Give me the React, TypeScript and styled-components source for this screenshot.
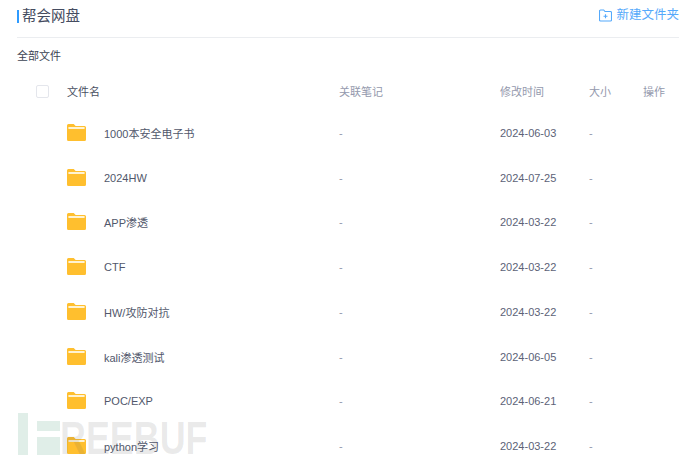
import React from "react";
import styled, { createGlobalStyle } from "styled-components";

const Global = createGlobalStyle`
  html, body { margin: 0; padding: 0; background: #fff; }
  body { width: 690px; height: 462px; overflow: hidden; font-family: "Liberation Sans", Arial, "Noto Sans CJK SC", sans-serif; }
`;
const Page = styled.div`
  position: relative; width: 690px; height: 462px; overflow: hidden; box-sizing: border-box; padding: 0 11px 0 17px;
`;
const Header = styled.header`
  box-sizing: border-box; border-bottom: 1px solid #ebedf0; height: 38px;
  display: flex; justify-content: space-between; align-items: flex-start; padding-top: 6px;
`;
const Title = styled.h1`
  margin: 0; font-size: 14.5px; line-height: 20px; font-weight: 400; color: #454c60; display: flex; align-items: center; gap: 3px;
  &::before { content: ""; flex: none; width: 2px; height: 13px; background: #2f9bff; }
`;
const NewFolder = styled.button`
  border: 0; background: none; padding: 0; display: flex; align-items: center; gap: 4px; font: inherit; font-size: 12.5px; line-height: 18px; color: #55a9fb;
`;
const Crumb = styled.div`
  font-size: 11px; line-height: 16px; color: #3c4353; margin-top: 10px;
`;
const Table = styled.div`margin-top: 7.5px;`;
const Row = styled.div<{ $head?: boolean }>`
  display: grid; grid-template-columns: 50px 272px 161px 89px 54px 1fr; align-items: center;
  height: ${p => (p.$head ? "39px" : "44.75px")};
  font-size: 11px; color: #9499ad;
`;
const CheckCell = styled.div`padding-left: 19px;`;
const Check = styled.span`
  display: block; width: 11px; height: 11px; border: 1px solid #e4e6ec; border-radius: 2px; background: #fff;
`;
const NameHead = styled.div`color: #4a5062;`;
const NameCell = styled.div`
  display: flex; align-items: center; gap: 18px; color: #51576b;
  svg { margin-bottom: 2px; flex: none; }
`;
const Dim = styled.div`color: #9499ad;`;
const DateText = styled.div`color: #5c6277;`;
const Watermark = styled.div`
  position: absolute; left: 18px; top: 413px; height: 42px; display: flex; align-items: flex-end; pointer-events: none;
`;
const MarkLogo = styled.div`
  display: grid; grid-template-columns: 10px 23px; column-gap: 9px; width: 42px; height: 42px; flex: none;
`;
const MarkBar = styled.span`background: rgba(60,150,110,.16); display: block;`;
const MarkBlocks = styled.div`
  display: grid; grid-template-rows: 10px 1fr; row-gap: 6px; margin-top: 8px;
`;
const MarkText = styled.span`
  font-family: "Liberation Sans", sans-serif; font-weight: 700; font-size: 46px; line-height: 33px; letter-spacing: 0;
  color: rgba(90,90,90,.13); transform: scaleX(.78); transform-origin: left bottom; white-space: nowrap; height: 33px;
`;

const Folder = () => (
  <svg width="19" height="18" viewBox="0 0 20 18" preserveAspectRatio="none" aria-hidden="true">
    <path d="M1.500 1h5.600l2 2H18.500A1.500 1.500 0 0 1 20 4.500v12a1.500 1.500 0 0 1-1.500 1.500h-17A1.500 1.500 0 0 1 0 16.500V2.500A1.500 1.500 0 0 1 1.500 1Z" fill="#ffbf2e" />
    <rect x="1.500" y="4" width="17" height="2" fill="#fff3d2" />
  </svg>
);
const PlusFolder = () => (
  <svg width="13" height="13" viewBox="0 0 13 13" fill="none" stroke="#55a9fb" strokeWidth="1.100" aria-hidden="true">
    <path d="M1.500 1h3.200l1.300 1.500h5.500a1 1 0 0 1 1 1v7.500a1 1 0 0 1-1 1h-10a1 1 0 0 1-1-1V2a1 1 0 0 1 1-1Z" />
    <path d="M4.500 7.200h4M6.500 5.200v4" />
  </svg>
);

const files = [
  ["1000本安全电子书", "2024-06-03"], ["2024HW", "2024-07-25"], ["APP渗透", "2024-03-22"], ["CTF", "2024-03-22"],
  ["HW/攻防对抗", "2024-03-22"], ["kali渗透测试", "2024-06-05"], ["POC/EXP", "2024-06-21"], ["python学习", "2024-03-22"],
];

export default function App() {
  return (
    <Page>
      <Global />
      <Header>
        <Title>帮会网盘</Title>
        <NewFolder><PlusFolder />新建文件夹</NewFolder>
      </Header>
      <Crumb>全部文件</Crumb>
      <Table>
        <Row $head>
          <CheckCell><Check /></CheckCell>
          <NameHead>文件名</NameHead>
          <Dim>关联笔记</Dim>
          <Dim>修改时间</Dim>
          <Dim>大小</Dim>
          <Dim>操作</Dim>
        </Row>
        {files.map(([name, date]) => (
          <Row key={name}>
            <div />
            <NameCell><Folder />{name}</NameCell>
            <Dim>-</Dim>
            <DateText>{date}</DateText>
            <Dim>-</Dim>
            <div />
          </Row>
        ))}
      </Table>
      <Watermark>
        <MarkLogo>
          <MarkBar />
          <MarkBlocks><MarkBar /><MarkBar /></MarkBlocks>
        </MarkLogo>
        <MarkText>REEBUF</MarkText>
      </Watermark>
    </Page>
  );
}
